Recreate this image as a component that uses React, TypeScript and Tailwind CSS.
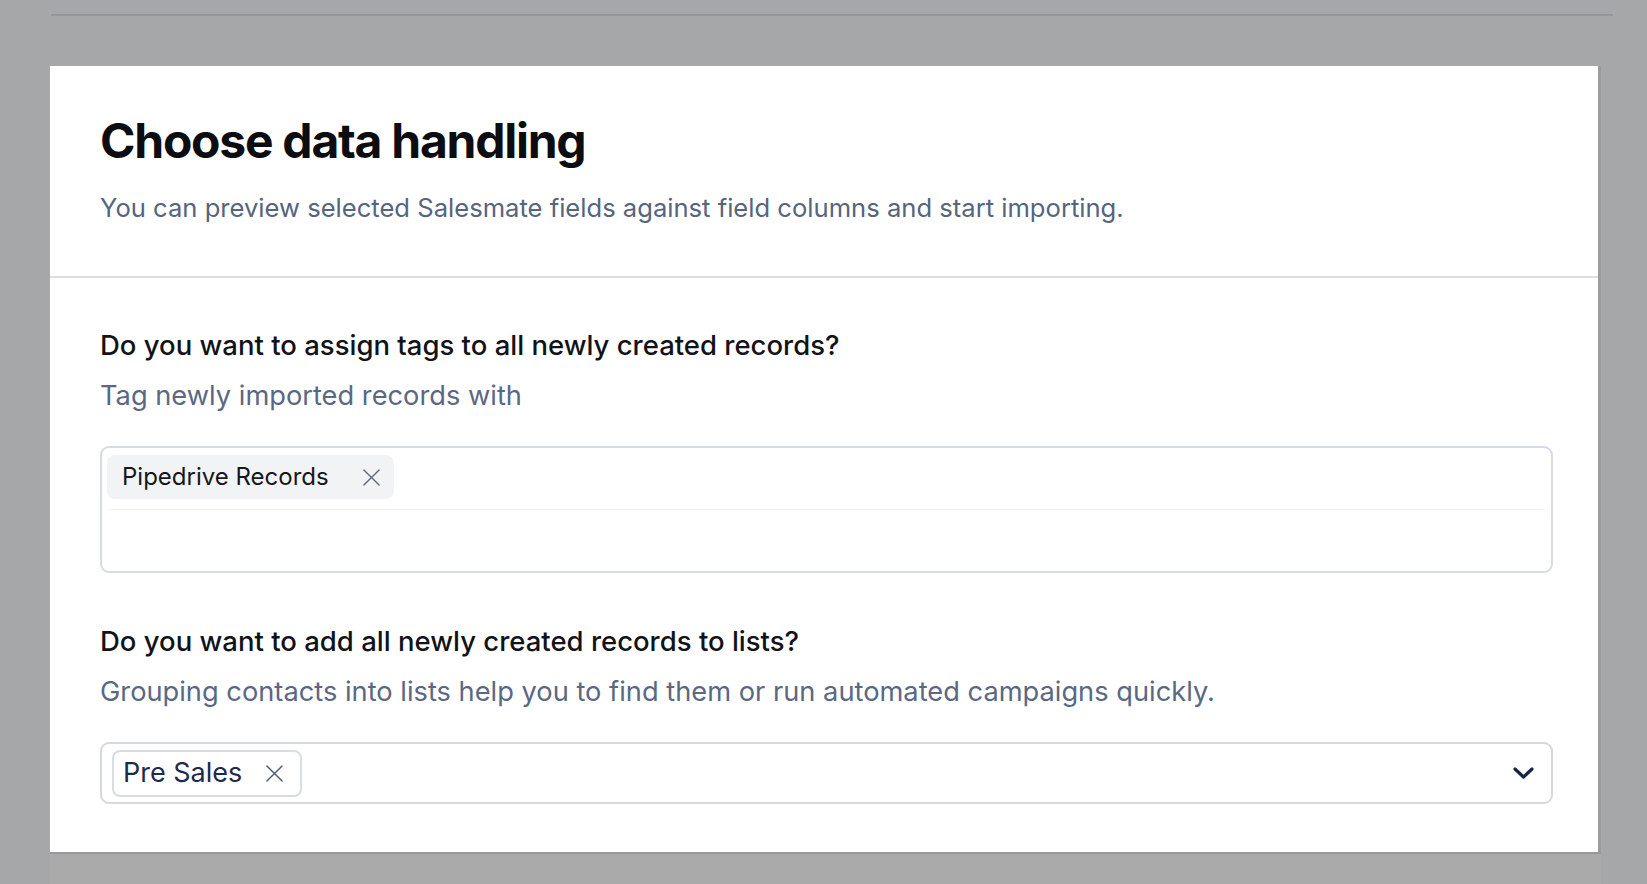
import React from "react";

function CloseIcon({ className }: { className?: string }) {
  return (
    <svg className={className} viewBox="0 0 20 20" fill="none" stroke="currentColor" strokeWidth={1.5} strokeLinecap="round">
      <path d="M2 2l16 16M18 2L2 18" />
    </svg>
  );
}

function Chevron() {
  return (
    <svg className="h-[12px] w-[21px] text-[#16254a]" viewBox="0 0 21 12" fill="none" stroke="currentColor" strokeWidth={3.2} strokeLinecap="round" strokeLinejoin="round">
      <path d="M2 2l8.5 8 8.5-8" />
    </svg>
  );
}

export default function App() {
  return (
    <div className="flex h-[884px] w-[1647px] flex-col overflow-hidden bg-[#a6a7a9] font-['Inter',sans-serif]">
      <div className="ml-[51px] mt-[14px] h-[2px] w-[1562px] bg-[#95969a]" />

      {/* modal */}
      <div className="ml-[50px] mt-[50px] w-[1551px] border-r-[3px] border-[#9a9b9e] bg-white">
        <div className="h-[212px] border-b-2 border-[#dedfe5] px-[50px] pt-[45px]">
          <h1 className="text-[48px] font-bold leading-[60px] tracking-[-0.026em] text-[#0c0d11]">
            Choose data handling
          </h1>
          <p className="mt-[22px] text-[25.6px] leading-[30px] text-[#56647e]">
            You can preview selected Salesmate fields against field columns and start importing.
          </p>
        </div>

        <div className="px-[50px] pb-[48px] pt-[53px]">
          <h2 className="text-[27.5px] font-medium leading-[28px] text-[#111318]">
            Do you want to assign tags to all newly created records?
          </h2>
          <p className="mt-[22px] text-[27.25px] leading-[30px] text-[#5a6883]">Tag newly imported records with</p>

          <div className="mt-[35px] flex h-[127px] w-[1453px] flex-col rounded-[9px] border-2 border-[#d6dbe6] px-[5px] pt-[7px]">
            <div className="flex h-[44px] w-fit items-center rounded-[8px] bg-[#f2f3f5] pl-[15px] pr-[13px]">
              <span className="text-[24px] leading-[30px] text-[#15171c]">Pipedrive Records</span>
              <CloseIcon className="ml-[33px] h-[19px] w-[19px] text-[#5e6a82]" />
            </div>
            <div className="mt-[10px] -mx-[3px] flex-1 rounded-t-[7px] border-t border-[#eef2f8]" />
          </div>

          <h2 className="mt-[54px] text-[27.5px] font-medium leading-[28px] text-[#111318]">
            Do you want to add all newly created records to lists?
          </h2>
          <p className="mt-[22px] text-[27.25px] leading-[30px] text-[#5a6883]">
            Grouping contacts into lists help you to find them or run automated campaigns quickly.
          </p>

          <div className="mt-[35px] flex h-[62px] w-[1453px] items-center justify-between rounded-[9px] border-2 border-[#d5d8df] pl-[10px] pr-[17px]">
            <div className="flex h-[47px] items-center rounded-[8px] border-2 border-[#d9dce3] bg-white pl-[9px] pr-[16px]">
              <span className="text-[27px] leading-[32px] text-[#1c2a4b]">Pre Sales</span>
              <CloseIcon className="ml-[23px] h-[19px] w-[19px] text-[#4e5a74]" />
            </div>
            <Chevron />
          </div>
        </div>
      </div>

      <div className="ml-[50px] w-[1551px] flex-1 border-t-2 border-[#98989c] bg-[#aaaaaa]" />
    </div>
  );
}
